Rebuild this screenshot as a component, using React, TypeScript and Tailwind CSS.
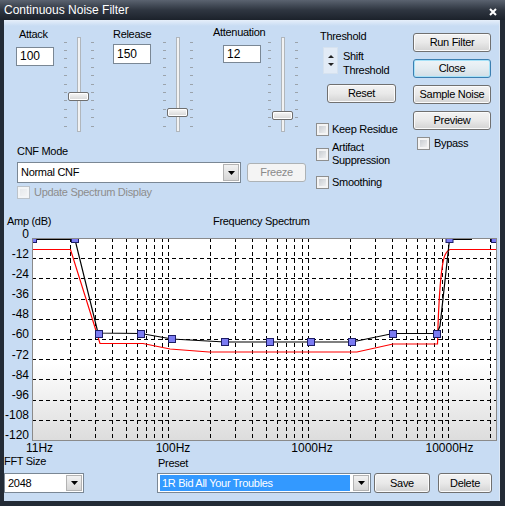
import type { ReactNode } from 'react'

// frequency -> x on the page (log scale, 100Hz at 168, 140px per decade)
const fx = (f: number) => 168 + 140 * Math.log10(f / 100)

const gridFreqs = [
  20, 30, 40, 50, 60, 70, 80, 90, 100,
  200, 300, 400, 500, 600, 700, 800, 900, 1000,
  2000, 3000, 4000, 5000, 6000, 7000, 8000, 9000, 10000, 20000,
]

const yLabels = ['0', '-12', '-24', '-36', '-48', '-60', '-72', '-84', '-96', '-108', '-120']

const xLabels = [
  { text: '11Hz', x: 39.5 },
  { text: '100Hz', x: 173 },
  { text: '1000Hz', x: 312 },
  { text: '10000Hz', x: 449.5 },
]

const nodes: [number, number][] = [
  [33, 239], [75, 239], [99, 334], [141, 334], [172, 339], [225, 342],
  [270, 342], [311, 342], [352, 342], [393, 334], [437, 334], [449.5, 239], [495, 239],
]

const blackPath =
  'M32 239.5 L75 239.5 L98 333 L141 333.5 L172 339 L225 342 L352 342 L393 333.5 L437 333.5 L440 326 L449.5 239.5 L472 239.5'
const redPath =
  'M32 249.5 L70.5 249.5 L100 343.5 L143 343.5 L170 349 L209 352 L357 352 L393 344 L437.5 344 L438 326 Q440 272 444 258 Q446 251 450 249.5 L496 249.5'

function Spectrum() {
  return (
    <svg width={465} height={203} viewBox="32 238 465 203" className="block mt-[10px]">
      <defs>
        <linearGradient id="plotbg" x1="0" y1="0" x2="0" y2="1">
          <stop offset="0.62" stopColor="#ffffff" />
          <stop offset="1" stopColor="#dcdcdc" />
        </linearGradient>
      </defs>
      <rect x={32} y={238} width={465} height={203} fill="url(#plotbg)" />
      {gridFreqs.map((f) => {
        const x = Math.round(fx(f)) + 0.5
        return <line key={f} x1={x} y1={238} x2={x} y2={440} stroke="#000" strokeDasharray="4 3" />
      })}
      {[1, 2, 3, 4, 5, 6, 7, 8, 9].map((k) => {
        const y = Math.round(238 + k * 20.2) + 0.5
        return <line key={k} x1={32} y1={y} x2={497} y2={y} stroke="#000" strokeDasharray="4 3" />
      })}
      <path d={redPath} fill="none" stroke="#ff0000" strokeWidth={1.2} />
      <path d={blackPath} fill="none" stroke="#000" strokeWidth={1.2} />
      {nodes.map(([cx, cy], i) => (
        <rect key={i} x={cx - 3.5} y={cy - 3.5} width={7} height={7} fill="#7b7bf2" stroke="#1c1c66" />
      ))}
      <rect x={32.5} y={238.5} width={464} height={202} fill="none" stroke="#8a8a8a" />
    </svg>
  )
}

function Slider({ thumb, className = '' }: { thumb: number; className?: string }) {
  return (
    <div className={`relative flex justify-center w-[30px] h-[95px] ${className}`}>
      <svg width={30} height={95} className="absolute inset-0">
        {[...Array(11)].map((_, i) => {
          const y = Math.round(4.5 + i * 8.4) + 0.5
          return (
            <g key={i} stroke="#9ba3ab">
              <line x1={0} y1={y} x2={3} y2={y} />
              <line x1={27} y1={y} x2={30} y2={y} />
            </g>
          )
        })}
      </svg>
      <div className="w-[4px] h-full border border-[#b0b6bc] bg-[#f1f2f3]" />
      <div
        className="absolute left-[4px] w-[21px] h-[9px] rounded-[2px] border border-[#6f6f6f] bg-gradient-to-b from-[#f8f8f8] to-[#d6d6d6] shadow-[inset_0_0_0_1px_#ffffff]"
        style={{ top: thumb }}
      />
    </div>
  )
}

function ValueBox({ value, className = '' }: { value: string; className?: string }) {
  return (
    <div className={`w-[38px] flex items-center pl-[3px] bg-white border border-[#7a8794] text-[12px] tracking-normal ${className}`}>
      {value}
    </div>
  )
}

function Btn({
  children,
  className = '',
  focus,
  disabled,
}: {
  children: ReactNode
  className?: string
  focus?: boolean
  disabled?: boolean
}) {
  const look = disabled
    ? 'border-[#adb2b5] bg-[#f4f4f4] text-[#8a8a8a]'
    : focus
      ? 'border-[#3c7fb1] bg-gradient-to-b from-[#eef4f8] via-[#e3ecf1] to-[#d2dee6] shadow-[inset_0_0_0_1px_#a6e2f8]'
      : 'border-[#707070] bg-gradient-to-b from-[#f3f3f3] via-[#e9e9e9] to-[#d3d3d3] shadow-[inset_0_0_0_1px_#fbfbfb]'
  return (
    <div className={`flex items-center justify-center rounded-[3px] border ${look} ${className}`}>
      {children}
    </div>
  )
}

function Check({ disabled }: { disabled?: boolean }) {
  return (
    <span
      className={`block shrink-0 w-[13px] h-[13px] p-[2px] border ${
        disabled ? 'border-[#bcc3ca] bg-[#f3f5f7]' : 'border-[#8e8f8f] bg-[#f4f4f4]'
      }`}
    >
      <span
        className={`block w-full h-full bg-gradient-to-br ${
          disabled ? 'from-[#e6e9ec] to-[#f3f4f5]' : 'from-[#c9cdd2] to-[#eeeff0]'
        }`}
      />
    </span>
  )
}

function CheckRow({ label, className = '' }: { label: string; className?: string }) {
  return (
    <div className={`flex items-center gap-[3px] ${className}`}>
      <Check />
      <span>{label}</span>
    </div>
  )
}

function DropButton() {
  return (
    <div className="w-[16px] self-stretch m-[1px] flex items-center justify-center border border-[#b3b3b3] bg-gradient-to-b from-[#f2f2f2] to-[#d6d6d6]">
      <svg width={7} height={4}>
        <path d="M0 0H7L3.5 4Z" fill="#000" />
      </svg>
    </div>
  )
}

function Select({
  children,
  className = '',
  highlight,
}: {
  children: ReactNode
  className?: string
  highlight?: boolean
}) {
  return (
    <div className={`flex bg-white border border-[#7a8794] ${className}`}>
      {highlight ? (
        <div className="flex-1 flex items-center m-[1px] ml-[2px] mr-[2px] pl-[2px] bg-[#3399ff] text-white">
          {children}
        </div>
      ) : (
        <div className="flex-1 flex items-center pl-[3px]">{children}</div>
      )}
      <DropButton />
    </div>
  )
}

function Spin() {
  return (
    <div className="w-[15px] h-[27px] bg-[#e2ebf6] border border-[#d6e2ef] flex flex-col items-center justify-between py-[7px]">
      <svg width={6} height={3}>
        <path d="M0 3H6L3 0Z" fill="#222" />
      </svg>
      <svg width={6} height={3}>
        <path d="M0 0H6L3 3Z" fill="#222" />
      </svg>
    </div>
  )
}

export default function App() {
  return (
    <div className="w-[505px] h-[506px] flex flex-col bg-[#232b36] font-['Liberation_Sans',Arial,sans-serif] text-[11px] leading-[13px] tracking-[-0.3px] text-black">
      {/* 타이틀 바 */}
      <div className="h-[20px] flex items-center justify-between pl-[4px] pr-[8px] bg-gradient-to-b from-[#5b6370] via-[#2f3641] to-[#1c222b] text-white text-[12px] tracking-normal">
        <span>Continuous Noise Filter</span>
        <svg width={8} height={8} className="mt-[3px]">
          <path d="M1 1L7 7M7 1L1 7" stroke="#fff" strokeWidth={2} />
        </svg>
      </div>

      <div className="flex-1 ml-[4px] mr-[5px] mb-[5px] flex flex-col bg-[linear-gradient(#e6effa,#c8dcf3_6px)] border-r border-[#dce7f4]">
        {/* 상단 컨트롤 */}
        <div className="flex pt-[8px]">
          <div className="w-[290px] ml-[12px] flex flex-col">
            <div className="flex items-start">
              <div className="w-[38px] flex flex-col">
                <span className="pl-[3px]">Attack</span>
                <ValueBox value="100" className="mt-[6px] h-[19px]" />
              </div>
              <Slider className="ml-[10px] mt-[9px]" thumb={55} />

              <div className="ml-[19px] w-[38px] flex flex-col">
                <span>Release</span>
                <ValueBox value="150" className="mt-[3px] h-[20px]" />
              </div>
              <Slider className="ml-[12px] mt-[9px]" thumb={71} />

              <div className="ml-[20px] w-[55px] flex flex-col">
                <span className="-mt-[2px]">Attenuation</span>
                <ValueBox value="12" className="ml-[10px] mt-[6px] h-[18px]" />
              </div>
              <Slider className="mt-[9px]" thumb={74} />
            </div>

            <span className="mt-[13px] ml-[1px]">CNF Mode</span>
            <div className="mt-[4px] ml-[1px] flex items-start">
              <Select className="w-[224px] h-[21px]">Normal CNF</Select>
              <Btn disabled className="ml-[6px] mt-[1px] w-[59px] h-[19px]">
                Freeze
              </Btn>
            </div>
            <div className="mt-[3px] ml-[1px] flex items-center gap-[4px] text-[#8d8d8d]">
              <Check disabled />
              <span>Update Spectrum Display</span>
            </div>
          </div>

          <div className="ml-[10px] w-[92px] flex flex-col">
            <span className="mt-[2px] pl-[4px]">Threshold</span>
            <div className="mt-[4px] flex">
              <div className="ml-[7px]">
                <Spin />
              </div>
              <span className="ml-[5px] mt-[2px] leading-[14px]">
                Shift
                <br />
                Threshold
              </span>
            </div>
            <Btn className="mt-[7px] ml-[11px] w-[69px] h-[19px]">Reset</Btn>
            <CheckRow className="mt-[20px]" label="Keep Residue" />
            <div className="mt-[5px] flex items-center gap-[3px]">
              <Check />
              <span>
                Artifact
                <br />
                Suppression
              </span>
            </div>
            <CheckRow className="mt-[9px]" label="Smoothing" />
          </div>

          <div className="ml-[5px] w-[78px] flex flex-col gap-[7px] pt-[5px]">
            <Btn className="h-[19px]">Run Filter</Btn>
            <Btn focus className="h-[19px]">
              Close
            </Btn>
            <Btn className="h-[19px]">Sample Noise</Btn>
            <Btn className="h-[19px]">Preview</Btn>
            <div className="ml-[4px] flex items-center gap-[4px]">
              <Check />
              <span>Bypass</span>
            </div>
          </div>
        </div>

        {/* 스펙트럼 */}
        <div className="mt-[16px] flex">
          <span className="ml-[3px] w-[206px]">Amp (dB)</span>
          <span>Frequency Spectrum</span>
        </div>
        <div className="flex items-start">
          <div className="w-[28px] h-[214px] flex flex-col justify-between items-end pr-[3px] text-[12px] tracking-normal">
            {yLabels.map((l) => (
              <span key={l}>{l}</span>
            ))}
          </div>
          <Spectrum />
        </div>
        <div className="relative h-[13px] text-[12px] tracking-normal">
          {xLabels.map((l) => (
            <span key={l.text} className="absolute top-0 -translate-x-1/2" style={{ left: l.x - 4 }}>
              {l.text}
            </span>
          ))}
        </div>

        {/* 하단 프리셋 */}
        <div className="flex items-start">
          <div className="w-[80px] flex flex-col">
            <span>FFT Size</span>
            <Select className="mt-[5px] h-[20px]">2048</Select>
          </div>
          <div className="ml-[73px] w-[214px] flex flex-col">
            <span className="pt-[2px] pl-[1px]">Preset</span>
            <Select highlight className="mt-[3px] h-[20px]">
              1R Bid All Your Troubles
            </Select>
          </div>
          <Btn className="ml-[3px] mt-[18px] w-[56px] h-[20px]">Save</Btn>
          <Btn className="ml-[8px] mt-[18px] w-[54px] h-[20px]">Delete</Btn>
        </div>
      </div>
    </div>
  )
}
